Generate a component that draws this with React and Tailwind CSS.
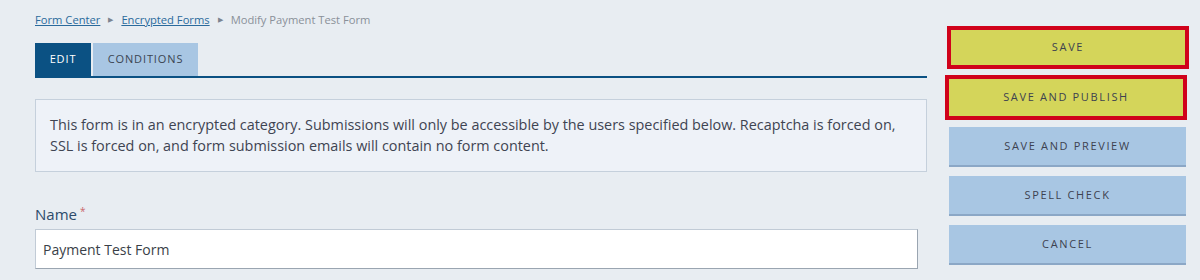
export default function App() {
  const font = { fontFamily: '"Open Sans", "Noto Sans", sans-serif' };
  return (
    <div className="w-[1200px] h-[280px] bg-[#e8edf2] overflow-hidden flex" style={font}>
      <div className="w-[892px] ml-[35px] flex flex-col">
        <div className="h-[40px] flex items-center text-[11.2px] text-[#8a9099] gap-[8px]">
          <span className="text-[#2a6a9c] underline">Form Center</span>
          <span className="text-[7px] text-[#7b8490]">▶</span>
          <span className="text-[#2a6a9c] underline">Encrypted Forms</span>
          <span className="text-[7px] text-[#7b8490]">▶</span>
          <span>Modify Payment Test Form</span>
        </div>
        <div className="mt-[3px] flex border-b-2 border-[#0b5183] h-[35px] gap-[2px]">
          <div className="w-[56px] bg-[#0b5183] text-white text-[11px] tracking-[0.08em] flex items-center justify-center">EDIT</div>
          <div className="w-[105px] bg-[#a8c6e3] text-[#3b4552] text-[11px] tracking-[0.08em] flex items-center justify-center">CONDITIONS</div>
        </div>
        <div className="mt-[21px] h-[73px] border border-[#c5d0dc] bg-[#eef2f8] px-[14px] pt-[14px] text-[14.4px] leading-[21px] text-[#3e4452]">
          This form is in an encrypted category. Submissions will only be accessible by the users specified below. Recaptcha is forced on, SSL is forced on, and form submission emails will contain no form content.
        </div>
        <div className="mt-[32px] text-[15px] text-[#2d4b6b] leading-[20px] flex items-start">
          Name<span className="text-[#c8666b] text-[10px] ml-[3px] leading-[14px]">*</span>
        </div>
        <div className="mt-[5px] w-[883px] h-[40px] bg-white border border-[#c1cbd6] border-r-[#9aa5b1] border-b-[#9aa5b1] flex items-center px-[7px] text-[14px] text-[#3a3f48]">
          Payment Test Form
        </div>
      </div>
      <div className="ml-[22px] w-[237px] flex flex-col pt-[26px] text-[11px] tracking-[0.15em] text-[#3d4250]">
        <div className="ml-[-2px] w-[242px] h-[43px] border-4 border-[#d0021b] bg-[#d4d55a] flex items-center justify-center">SAVE</div>
        <div className="mt-[6px] ml-[-4px] w-[242px] h-[45px] border-4 border-[#d0021b] bg-[#d4d55a] flex items-center justify-center">SAVE AND PUBLISH</div>
        <div className="mt-[7px] h-[40px] bg-[#a8c6e3] border-b-2 border-[#8ba7c6] flex items-center justify-center">SAVE AND PREVIEW</div>
        <div className="mt-[9px] h-[40px] bg-[#a8c6e3] border-b-2 border-[#8ba7c6] flex items-center justify-center">SPELL CHECK</div>
        <div className="mt-[9px] h-[40px] bg-[#a8c6e3] border-b-2 border-[#8ba7c6] flex items-center justify-center">CANCEL</div>
      </div>
    </div>
  );
}
